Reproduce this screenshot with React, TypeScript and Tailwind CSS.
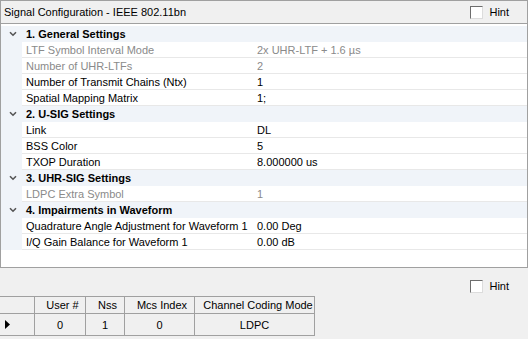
import React from "react";

type Item = { name: string; value: string; disabled?: boolean };
type Group = { title: string; items: Item[] };

const groups: Group[] = [
  {
    title: "1. General Settings",
    items: [
      { name: "LTF Symbol Interval Mode", value: "2x UHR-LTF + 1.6 µs", disabled: true },
      { name: "Number of UHR-LTFs", value: "2", disabled: true },
      { name: "Number of Transmit Chains (Ntx)", value: "1" },
      { name: "Spatial Mapping Matrix", value: "1;" },
    ],
  },
  {
    title: "2. U-SIG Settings",
    items: [
      { name: "Link", value: "DL" },
      { name: "BSS Color", value: "5" },
      { name: "TXOP Duration", value: "8.000000 us" },
    ],
  },
  {
    title: "3. UHR-SIG Settings",
    items: [{ name: "LDPC Extra Symbol", value: "1", disabled: true }],
  },
  {
    title: "4. Impairments in Waveform",
    items: [
      { name: "Quadrature Angle Adjustment for Waveform 1", value: "0.00 Deg" },
      { name: "I/Q Gain Balance for Waveform 1", value: "0.00 dB" },
    ],
  },
];

const Chevron = () => (
  <svg width="8" height="6" viewBox="0 0 8 6" className="block">
    <path d="M1 1.2 L4 4.2 L7 1.2" fill="none" stroke="#555" strokeWidth="1.6" />
  </svg>
);

const HintBox = () => (
  <div className="flex items-center gap-[6px]">
    <div className="w-[13px] h-[13px] bg-white border border-t-[#6d6d6d] border-l-[#6d6d6d] border-r-[#dcdcdc] border-b-[#dcdcdc]" />
    <span className="text-black leading-[13px]">Hint</span>
  </div>
);

const GroupRow = ({ title }: { title: string }) => (
  <div className="flex h-[16px] bg-[#f0f4f9] items-center">
    <div className="w-[21px] flex justify-center pl-[3px]">
      <Chevron />
    </div>
    <span className="pl-[4px] font-bold text-black">{title}</span>
  </div>
);

const PropRow = ({ item }: { item: Item }) => {
  const color = item.disabled ? "text-[#8a8a8a]" : "text-black";
  return (
    <div className="flex h-[16px]">
      <div className="w-[21px] bg-[#f0f4f9]" />
      <div className="flex flex-1 items-center border-b border-[#e8e8e8] bg-white">
        <span className={`w-[233px] pl-[4px] ${color}`}>{item.name}</span>
        <span className={`pl-[2px] ${color}`}>{item.value}</span>
      </div>
    </div>
  );
};

const App = () => {
  return (
    <div
      className="w-[528px] h-[339px] bg-[#f0f0f0] flex flex-col overflow-hidden text-[11px] leading-[16px]"
      style={{ fontFamily: '"Liberation Sans", Arial, sans-serif' }}
    >
      <div className="h-[268px] border border-[#a0a0a0] flex flex-col">
        <div className="h-[23px] border-b border-[#a0a0a0] bg-[#f0f0f0] flex items-center justify-between pl-[3px] pr-[18px]">
          <span className="text-black">Signal Configuration - IEEE 802.11bn</span>
          <HintBox />
        </div>
        <div className="flex-1 bg-white pt-[2px]">
          {groups.map((g) => (
            <React.Fragment key={g.title}>
              <GroupRow title={g.title} />
              {g.items.map((it) => (
                <PropRow key={it.name} item={it} />
              ))}
            </React.Fragment>
          ))}
        </div>
      </div>
      <div className="flex-1 flex flex-col">
        <div className="flex justify-end pt-[9px] pr-[19px] h-[28px]">
          <HintBox />
        </div>
        <div className="w-[315px] text-black">
          <div className="flex h-[18px] border-t border-b border-[#a0a0a0]">
            <div className="w-[35px] border-r border-[#a0a0a0]" />
            <div className="w-[51px] border-r border-[#a0a0a0] flex items-center justify-center pl-[5px]">User #</div>
            <div className="w-[39px] border-r border-[#a0a0a0] flex items-center justify-center pl-[5px]">Nss</div>
            <div className="w-[70px] border-r border-[#a0a0a0] flex items-center justify-center pl-[5px]">Mcs Index</div>
            <div className="w-[120px] border-r border-[#a0a0a0] flex items-center justify-center pl-[7px]">Channel Coding Mode</div>
          </div>
          <div className="flex h-[22px] border-b border-[#a0a0a0]">
            <div className="w-[35px] border-r border-[#a0a0a0] flex items-center pl-[5px]">
              <svg width="5" height="9" viewBox="0 0 5 9" className="block">
                <path d="M0 0 L5 4.5 L0 9 Z" fill="#000" />
              </svg>
            </div>
            <div className="w-[51px] border-r border-[#a0a0a0] flex items-center justify-center">0</div>
            <div className="w-[39px] border-r border-[#a0a0a0] flex items-center justify-center">1</div>
            <div className="w-[70px] border-r border-[#a0a0a0] flex items-center justify-center">0</div>
            <div className="w-[120px] border-r border-[#a0a0a0] flex items-center justify-center">LDPC</div>
          </div>
        </div>
      </div>
    </div>
  );
};

export default App;
